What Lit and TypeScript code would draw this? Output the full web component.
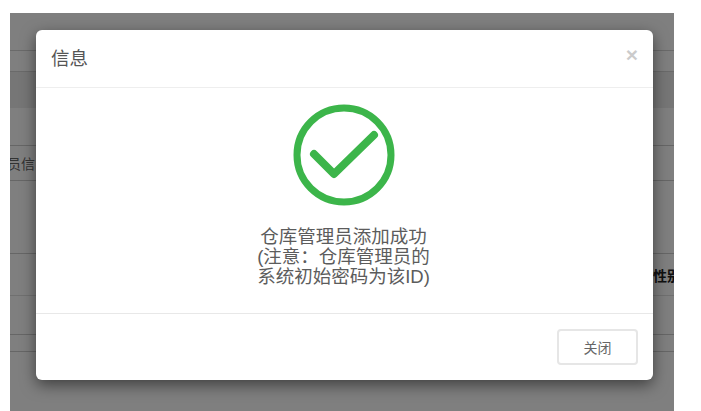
import { LitElement, html, css } from "lit";
import { customElement } from "lit/decorators.js";

@customElement("app-root")
export class AppRoot extends LitElement {
  static styles = css`
    :host {
      display: block;
      height: 411px;
      padding: 13px 27px 0 10px;
      box-sizing: border-box;
      background: #fff;
      font-family: "Liberation Sans", "Noto Sans CJK SC", sans-serif;
      overflow: hidden;
    }
    .stage {
      position: relative;
      height: 398px;
      overflow: hidden;
      background: #fff;
    }
    .row {
      box-sizing: border-box;
      border-bottom: 1px solid #ccc;
      display: flex;
      align-items: center;
      overflow: hidden;
      white-space: nowrap;
    }
    .r1 { height: 38px; border-color: #d4d4d4; }
    .r2 { height: 21px; border-color: #d4d4d4; }
    .r3 { height: 36px; background: #ececec; border-bottom: none; }
    .r4 { height: 38px; }
    .r5 { height: 35px; font-size: 14px; color: #666; }
    .r6 { height: 73px; }
    .r7 { height: 42px; border-color: #e0e0e0; justify-content: flex-end; font-size: 14px; font-weight: 700; color: #222; }
    .r8 { height: 39px; }
    .r9 { height: 17px; }
    .clip-left { margin-left: -3px; }
    .clip-right { margin-right: -7px; }
    .backdrop {
      position: absolute;
      inset: 0;
      background: rgba(0, 0, 0, 0.5);
    }
    .modal {
      position: absolute;
      left: 26px;
      top: 17px;
      width: 617px;
      height: 350px;
      background: #fff;
      border-radius: 6px;
      box-shadow: 0 5px 15px rgba(0, 0, 0, 0.5);
      display: flex;
      flex-direction: column;
    }
    .header {
      height: 58px;
      box-sizing: border-box;
      border-bottom: 1px solid #eee;
      display: flex;
      align-items: center;
      justify-content: space-between;
      padding: 0 15px 3px 15px;
    }
    .title { font-size: 18.5px; color: #555; }
    .close {
      font-size: 21px;
      font-weight: 700;
      color: #000;
      opacity: 0.2;
      line-height: 1;
      margin-top: -5px;
    }
    .body {
      flex: 1;
      display: flex;
      flex-direction: column;
      align-items: center;
      padding-top: 16px;
      margin-right: 2px;
    }
    .icon { width: 102px; height: 102px; display: block; }
    .msg {
      margin-top: 21px;
      font-size: 18.5px;
      line-height: 20px;
      text-align: center;
      color: #5c5c5c;
    }
    .footer {
      height: 67px;
      box-sizing: border-box;
      border-top: 1px solid #e8e8e8;
      display: flex;
      justify-content: flex-end;
      align-items: flex-start;
      padding: 15px 15px 0 0;
    }
    .btn {
      width: 81px;
      height: 36px;
      box-sizing: border-box;
      border: 2px solid #e6e6e6;
      border-radius: 4px;
      background: #fff;
      color: #666;
      font: inherit;
      font-size: 14px;
      padding: 0;
    }
  `;

  render() {
    const colon = "\uFF1A";
    return html`
      <div class="stage">
        <div class="row r1"></div>
        <div class="row r2"></div>
        <div class="row r3"></div>
        <div class="row r4"></div>
        <div class="row r5"><span class="clip-left">员信</span></div>
        <div class="row r6"></div>
        <div class="row r7"><span class="clip-right">性别</span></div>
        <div class="row r8"></div>
        <div class="row r9"></div>
        <div class="backdrop"></div>
        <div class="modal">
          <div class="header">
            <span class="title">信息</span>
            <span class="close">×</span>
          </div>
          <div class="body">
            <svg class="icon" viewBox="0 0 102 102" fill="none" stroke="#3cb54a">
              <circle cx="51" cy="51" r="47" stroke-width="7"></circle>
              <path d="M21 50 L41 70 L81 31" stroke-width="8" stroke-linecap="round" stroke-linejoin="round"></path>
            </svg>
            <div class="msg">仓库管理员添加成功<br />(注意${colon}仓库管理员的<br />系统初始密码为该ID)</div>
          </div>
          <div class="footer"><button class="btn">关闭</button></div>
        </div>
      </div>
    `;
  }
}
